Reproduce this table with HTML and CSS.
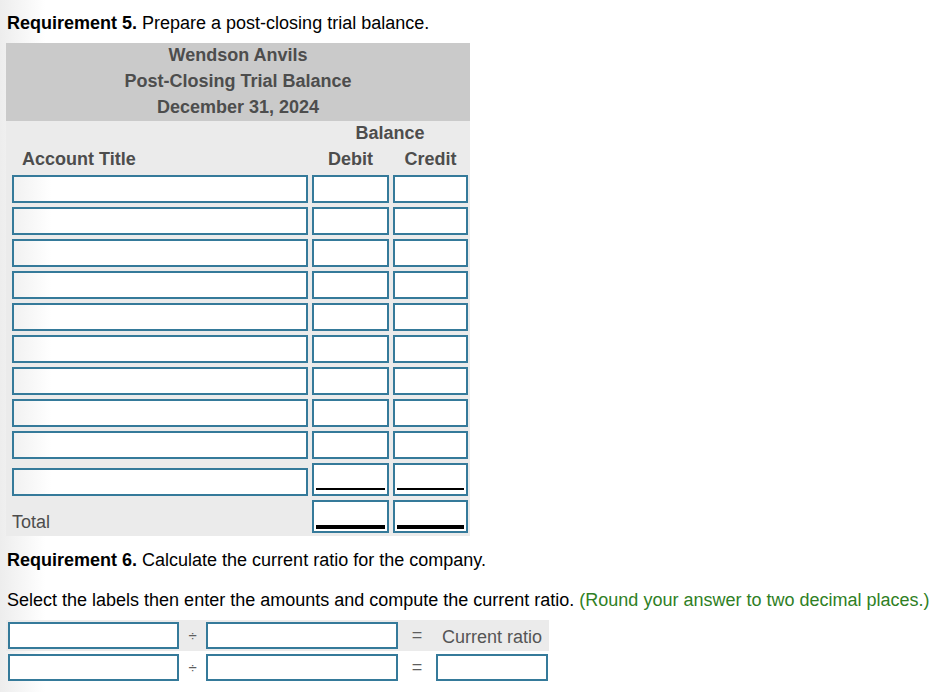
FILE: index.html
```html
<!DOCTYPE html>
<html>
<head>
<meta charset="utf-8">
<link rel="stylesheet" href="styles.css">
</head>
<body>
<div class="page">
  <p class="req"><b>Requirement 5.</b> Prepare a post-closing trial balance.</p>
  <div class="tb">
    <div class="tb-head">
      <div>Wendson Anvils</div>
      <div>Post-Closing Trial Balance</div>
      <div>December 31, 2024</div>
    </div>
    <div class="tb-body">
      <div class="grid">
        <div class="h-bal">Balance</div>
        <div class="h-acct">Account Title</div>
        <div class="h-col">Debit</div>
        <div class="h-col">Credit</div>

        <div class="c-acct"><div class="box"></div></div><div class="c-amt"><div class="box"></div></div><div class="c-amt"><div class="box"></div></div>
        <div class="c-acct"><div class="box"></div></div><div class="c-amt"><div class="box"></div></div><div class="c-amt"><div class="box"></div></div>
        <div class="c-acct"><div class="box"></div></div><div class="c-amt"><div class="box"></div></div><div class="c-amt"><div class="box"></div></div>
        <div class="c-acct"><div class="box"></div></div><div class="c-amt"><div class="box"></div></div><div class="c-amt"><div class="box"></div></div>
        <div class="c-acct"><div class="box"></div></div><div class="c-amt"><div class="box"></div></div><div class="c-amt"><div class="box"></div></div>
        <div class="c-acct"><div class="box"></div></div><div class="c-amt"><div class="box"></div></div><div class="c-amt"><div class="box"></div></div>
        <div class="c-acct"><div class="box"></div></div><div class="c-amt"><div class="box"></div></div><div class="c-amt"><div class="box"></div></div>
        <div class="c-acct"><div class="box"></div></div><div class="c-amt"><div class="box"></div></div><div class="c-amt"><div class="box"></div></div>
        <div class="c-acct"><div class="box"></div></div><div class="c-amt"><div class="box"></div></div><div class="c-amt"><div class="box"></div></div>

        <div class="c-acct c-bottom"><div class="box"></div></div>
        <div class="c-amt"><div class="box box-line"><div class="line single"></div></div></div>
        <div class="c-amt"><div class="box box-line"><div class="line single"></div></div></div>

        <div class="c-total">Total</div>
        <div class="c-amt c-tot"><div class="box box-tot"><div class="line double"></div></div></div>
        <div class="c-amt c-tot"><div class="box box-tot"><div class="line double"></div></div></div>
      </div>
    </div>
  </div>

  <p class="req req6"><b>Requirement 6.</b> Calculate the current ratio for the company.</p>
  <p class="req sel">Select the labels then enter the amounts and compute the current ratio. <span class="green">(Round your answer to two decimal places.)</span></p>

  <div class="ratio">
    <div class="r-row r-grey">
      <div class="box rb1"></div>
      <div class="op div">÷</div>
      <div class="box rb2"></div>
      <div class="op eq">=</div>
      <div class="r-label">Current ratio</div>
    </div>
    <div class="r-row">
      <div class="box rb1"></div>
      <div class="op div">÷</div>
      <div class="box rb2"></div>
      <div class="op eq">=</div>
      <div class="box rb3"></div>
    </div>
  </div>
</div>
</body>
</html>
```

FILE: styles.css
```css
html, body {
  margin: 0;
  padding: 0;
}
body {
  font-family: "Liberation Sans", Arial, sans-serif;
  font-size: 18px;
  color: #000;
  background: linear-gradient(to right, #ededed 0px, #ffffff 45px);
  width: 952px;
  height: 692px;
  overflow: hidden;
}
.page {
  padding: 13px 0 0 6px;
}
.req {
  margin: 0 0 0 1px;
  line-height: 20px;
  white-space: nowrap;
}
.tb {
  margin-top: 10px;
  width: 464px;
}
.tb-head {
  background: #cacaca;
  color: #4d4d4d;
  font-weight: bold;
  text-align: center;
}
.tb-head > div {
  line-height: 24px;
  padding-bottom: 2px;
}
.tb-body {
  background: #ebebeb;
}
.grid {
  display: grid;
  grid-template-columns: 304px 81px 79px;
}
.h-bal,
.h-acct,
.h-col {
  font-weight: bold;
  color: #4d4d4d;
  line-height: 24px;
  padding-bottom: 2px;
}
.h-bal {
  grid-column: 2 / 4;
  text-align: center;
}
.h-acct {
  padding-left: 16px;
}
.h-col {
  text-align: center;
}
.c-acct {
  padding: 2px 2px 2px 6px;
  display: flex;
  align-items: flex-end;
}
.c-amt {
  padding: 2px;
  display: flex;
  align-items: flex-end;
}
.box {
  box-sizing: border-box;
  height: 28px;
  width: 100%;
  border: 2px solid #357a9a;
  background: linear-gradient(to right, #f1f1f1 0px, #ffffff 38px);
}
.c-amt .box {
  background: #fff;
}
.box-line {
  height: 33px;
  padding: 2px 2px 4px 2px;
}
.box-tot {
  height: 33px;
  padding: 2px;
}
.line {
  box-sizing: border-box;
  height: 100%;
}
.line.single {
  border-bottom: 2px solid #000;
}
.line.double {
  border-bottom: 4px solid #000;
}
.c-total {
  padding: 0 0 4px 6px;
  display: flex;
  align-items: flex-end;
  color: #4d4d4d;
  line-height: 20px;
}
.c-tot {
  padding-bottom: 3px;
}
.req6 {
  margin-top: 14px;
}
.sel {
  margin-top: 20px;
}
.green {
  color: #2f7f25;
}
.ratio {
  margin-top: 10px;
  display: flex;
  flex-direction: column;
  gap: 1px;
}
.r-row {
  display: flex;
  align-items: center;
  padding: 2px 0 2px 2px;
  width: 541px;
}
.r-grey {
  background: #ebebeb;
}
.ratio .box {
  height: 27px;
  background: #fff;
}
.rb1 {
  width: 171px;
}
.rb2 {
  width: 192px;
}
.rb3 {
  width: 112px;
}
.op {
  text-align: center;
  color: #5e5e5e;
}
.div {
  width: 27px;
  font-size: 15px;
}
.eq {
  width: 38px;
  font-size: 18px;
}
.r-label {
  padding: 3px 0 0 6px;
  color: #555;
  line-height: 20px;
}
```
